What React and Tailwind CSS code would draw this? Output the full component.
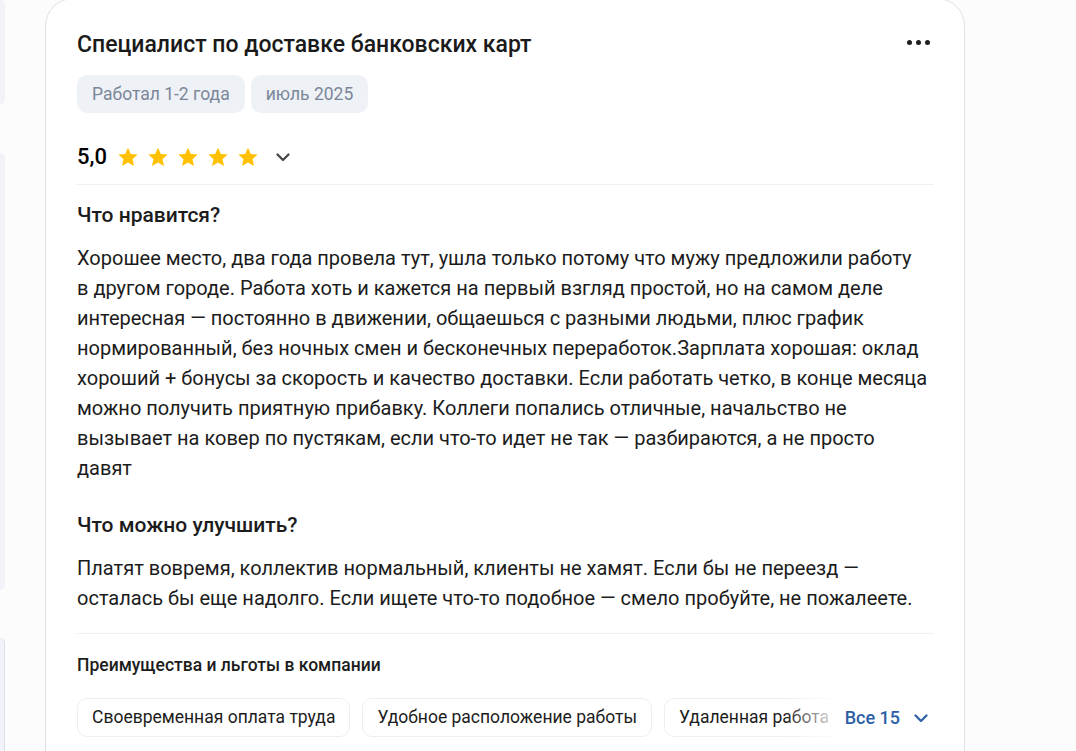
import React from 'react'

function Star() {
  return (
    <svg width="22" height="22" viewBox="0 0 24 24">
      <path
        d="M12 1.8l3.1 6.9 7.4.7-5.6 5 1.7 7.4L12 17.9l-6.6 3.9 1.7-7.4-5.6-5 7.4-.7z"
        fill="#ffc000"
      />
    </svg>
  )
}

function Chevron({ color = '#444' }) {
  return (
    <svg width="14" height="14" viewBox="0 0 14 14" fill="none">
      <path d="M1.5 4.5L7 10l5.5-5.5" stroke={color} strokeWidth="2.2" strokeLinecap="round" strokeLinejoin="round" />
    </svg>
  )
}

const liked = [
  'Хорошее место, два года провела тут, ушла только потому что мужу предложили работу',
  'в другом городе. Работа хоть и кажется на первый взгляд простой, но на самом деле',
  'интересная — постоянно в движении, общаешься с разными людьми, плюс график',
  'нормированный, без ночных смен и бесконечных переработок.Зарплата хорошая: оклад',
  'хороший + бонусы за скорость и качество доставки. Если работать четко, в конце месяца',
  'можно получить приятную прибавку. Коллеги попались отличные, начальство не',
  'вызывает на ковер по пустякам, если что-то идет не так — разбираются, а не просто',
  'давят',
]

const improve = [
  'Платят вовремя, коллектив нормальный, клиенты не хамят. Если бы не переезд —',
  'осталась бы еще надолго. Если ищете что-то подобное — смело пробуйте, не пожалеете.',
]

const perks = ['Своевременная оплата труда', 'Удобное расположение работы', 'Удаленная работа']

export default function App() {
  return (
    <div className="h-[751px] overflow-hidden bg-[#fcfcfd] flex items-start gap-[40px] font-[Roboto,Arial,sans-serif]">
      {/* Left column (cut off) */}
      <div className="w-[5px] shrink-0 flex flex-col gap-[48px]">
        <div className="h-[105px] bg-[#f2f3f9] rounded-r-[14px]" />
        <div className="h-[437px] bg-[#f2f3f9] rounded-r-[14px]" />
        <div className="h-[200px] bg-[#f2f3f9] rounded-tr-[14px] border-r border-[#dcdfe7]" />
      </div>

      {/* Review card */}
      <div className="w-[920px] shrink-0 mt-[-2px] bg-white border border-[#dde0e8] rounded-[28px] pt-[31px] pb-[48px] pl-[31px] pr-[30px] text-[#1c1c1c]">
        <div className="flex items-start justify-between">
          <h2 className="text-[23px] leading-[30px] font-medium text-[#1a1a1a]">
            Специалист по доставке банковских карт
          </h2>
          <div className="flex gap-[4px] mt-[10px] mr-[4px]">
            <span className="w-[5px] h-[5px] rounded-full bg-[#1f1f1f]" />
            <span className="w-[5px] h-[5px] rounded-full bg-[#1f1f1f]" />
            <span className="w-[5px] h-[5px] rounded-full bg-[#1f1f1f]" />
          </div>
        </div>

        <div className="flex gap-[6px] mt-[15px]">
          <span className="h-[38px] px-[15px] flex items-center rounded-[10px] bg-[#eef1f6] text-[#7b8699] text-[17.5px]">
            Работал 1-2 года
          </span>
          <span className="h-[38px] px-[15px] flex items-center rounded-[10px] bg-[#eef1f6] text-[#7b8699] text-[17.5px]">
            июль 2025
          </span>
        </div>

        <div className="flex items-center h-[30px] mt-[29px] box-content pb-[12px] border-b border-[#eef0f4]">
          <span className="text-[22px] leading-[30px] font-medium text-black">5,0</span>
          <div className="flex gap-[8px] ml-[10px]">
            <Star />
            <Star />
            <Star />
            <Star />
            <Star />
          </div>
          <span className="ml-[17px] flex">
            <Chevron />
          </span>
        </div>

        <h3 className="mt-[15px] text-[21px] leading-[30px] font-medium">Что нравится?</h3>
        <p className="mt-[13px] text-[20px] leading-[30px] whitespace-nowrap">
          {liked.map((l, i) => (
            <span key={i} className="block">
              {l}
            </span>
          ))}
        </p>

        <h3 className="mt-[27px] text-[21px] leading-[30px] font-medium">Что можно улучшить?</h3>
        <p className="mt-[13px] pb-[20px] text-[20px] leading-[30px] whitespace-nowrap border-b border-[#eef0f4]">
          {improve.map((l, i) => (
            <span key={i} className="block">
              {l}
            </span>
          ))}
        </p>

        <h4 className="mt-[19px] text-[17.5px] leading-[24px] font-medium">Преимущества и льготы в компании</h4>
        <div className="mt-[21px] flex items-center">
          <div className="relative flex-1 overflow-hidden flex gap-[12px]">
            {perks.map((p) => (
              <span
                key={p}
                className="shrink-0 h-[39px] px-[14px] flex items-center rounded-[10px] border border-[#eceef3] text-[17.5px] text-[#1c1c1c]"
              >
                {p}
              </span>
            ))}
            <div className="absolute right-0 top-0 h-full w-[56px] bg-gradient-to-r from-transparent to-white" />
          </div>
          <button className="flex items-center gap-[14px] pl-[4px] pr-[6px] text-[#2d5fa6] text-[18px] font-medium">
            Все 15
            <Chevron color="#2d5fa6" />
          </button>
        </div>
      </div>
    </div>
  )
}
